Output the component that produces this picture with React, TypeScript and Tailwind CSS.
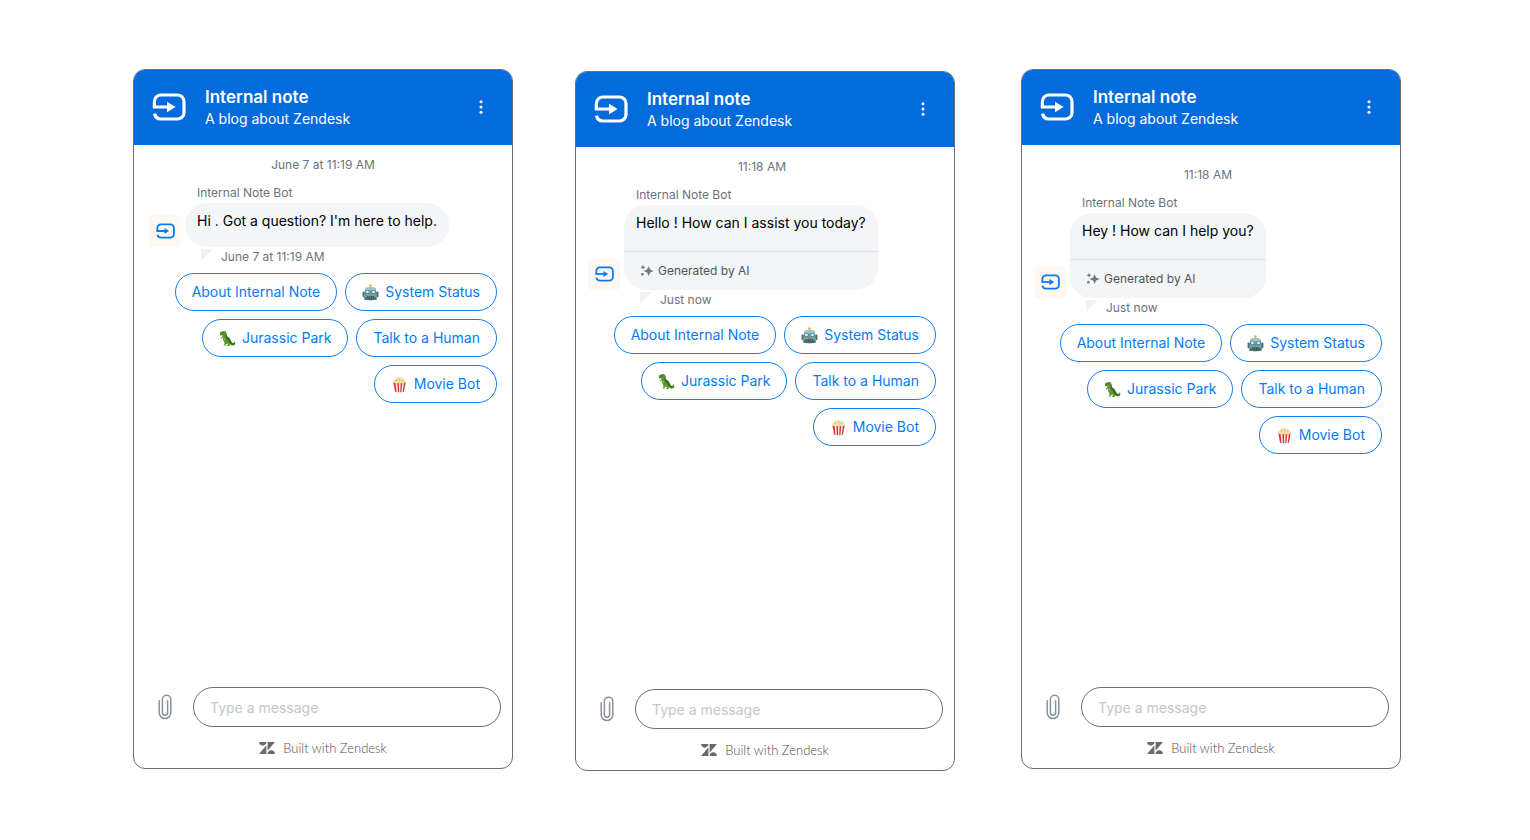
import React from "react";

type Reply = { label: string; icon?: "robot" | "dino" | "popcorn" };

type Chat = {
  time: string;
  message: string;
  meta: string;
  ai: boolean;
  panelClass: string;
  bodyClass: string;
};

const replies: Reply[] = [
  { label: "About Internal Note" },
  { label: "System Status", icon: "robot" },
  { label: "Jurassic Park", icon: "dino" },
  { label: "Talk to a Human" },
  { label: "Movie Bot", icon: "popcorn" },
];

const chats: Chat[] = [
  {
    time: "June 7 at 11:19 AM",
    message: "Hi . Got a question? I'm here to help.",
    meta: "June 7 at 11:19 AM",
    ai: false,
    panelClass: "",
    bodyClass: "pt-2.5 pl-[15px] pr-[15px]",
  },
  {
    time: "11:18 AM",
    message: "Hello ! How can I assist you today?",
    meta: "Just now",
    ai: true,
    panelClass: "mt-0.5 ml-[62px]",
    bodyClass: "pt-2.5 pl-3 pr-[18px]",
  },
  {
    time: "11:18 AM",
    message: "Hey ! How can I help you?",
    meta: "Just now",
    ai: true,
    panelClass: "ml-[66px]",
    bodyClass: "pt-5 pl-3 pr-[18px]",
  },
];

function NoteLogo({ className }: { className: string }) {
  return (
    <svg viewBox="0 0 34 28" className={className} fill="none" aria-hidden="true">
      <path
        d="M2.4 14V8.6A6.6 6.6 0 0 1 9 2h16.4A6.6 6.6 0 0 1 32 8.6v10.8a6.6 6.6 0 0 1-6.6 6.6H9c-3.400 0-5.900-2.200-6.500-5.400"
        stroke="currentColor"
        strokeWidth="3.2"
      />
      <path d="M.8 14H16" stroke="currentColor" strokeWidth="3.2" />
      <path d="M15 8.800 23.600 14 15 19.200z" fill="currentColor" />
    </svg>
  );
}

function RobotIcon() {
  return (
    <svg viewBox="0 0 18 18" className="size-[17px]" aria-hidden="true">
      <path d="M8.500 2h1v3h-1z" fill="#7b8a8f" />
      <circle cx="9" cy="1.800" r="1.500" fill="#f0b13c" />
      <rect x="0.6" y="8" width="2.4" height="6" rx="1" fill="#526a70" />
      <rect x="15" y="8" width="2.4" height="6" rx="1" fill="#526a70" />
      <path d="M3.600 4.200Q9 2.800 14.400 4.200l1.200 12.200q-6.600 1.600-13.200 0z" fill="#6fa3ac" />
      <path d="M3.600 4.200Q9 2.800 14.400 4.200l.2 2.400H3.400z" fill="#9bc5ca" />
      <path d="M2.600 14h12.800l.2 2.400q-6.600 1.600-13.200 0z" fill="#48727b" />
      <circle cx="5.800" cy="8.400" r="2.300" fill="#3c7f92" />
      <circle cx="12.200" cy="8.400" r="2.300" fill="#3c7f92" />
      <circle cx="5.800" cy="8.400" r="1.500" fill="#d7f6fa" />
      <circle cx="12.200" cy="8.400" r="1.500" fill="#d7f6fa" />
      <path d="m9 9.600 1.200 2H7.800z" fill="#d9534a" />
      <rect x="5" y="13" width="8" height="2.3" rx="1" fill="#2d4c55" />
      <path d="M6.200 13.400h1v1.500h-1zM8.500 13.400h1v1.500h-1zM10.800 13.400h1v1.500h-1z" fill="#e66a50" />
    </svg>
  );
}

function DinoIcon() {
  return (
    <svg viewBox="0 0 18 18" className="size-[17px]" aria-hidden="true">
      <path
        d="M.8 3.600C1 2 2.400 1.500 3.800 1.600 5 .8 7 1 7.600 2.300c.7 1.300.3 2.700.7 3.900.5 1.300 2.400 1.700 3.400 3.200.8 1.300 1.200 3.300 2.500 4.100 1.300.7 2.200-.4 2.300-2.200 1.300 1.800 1.200 4.600-.9 5.100-1.500.4-2.800-.3-3.900-1.200l-.4 1.700H8.700l-.2-.7 1-.3-.5-1.500-1.700.6-.1 1.500H5l-.2-.7 1-.4-.2-2.700c-1.300-1.500-1.700-3.100-1.300-4.900l-1.500 1.200-.9-.3.2-.7 1.300-1.200c.2-.5.3-.9.3-1.200l-2.200.2z"
        fill="#5b9632"
      />
      <path
        d="M7.700 3.200c.6 1.300.2 2.500.7 3.500.6 1.200 2.200 1.500 3.200 3 .8 1.200 1.200 3.200 2.500 4 1.100.6 2.100.1 2.500-1 .2 1.400-.4 2.800-1.800 3-2.700.2-3.700-2-4.700-3.700-1-1.800-3.100-2.700-3.300-5z"
        fill="#356d22"
      />
      <path d="M5 7.800c.9.300 1.300 1.800 1.100 3.200-.7-.6-1.300-1.800-1.100-3.200z" fill="#a8c86a" />
      <path d="m1 4.500 2.900-.2" stroke="#2b4b18" strokeWidth=".5" />
      <circle cx="4.300" cy="2.700" r=".5" fill="#1b2a10" />
    </svg>
  );
}

function PopcornIcon() {
  return (
    <svg viewBox="0 0 18 18" className="size-[17px]" aria-hidden="true">
      <path d="M2.500 6.500h13l-1.800 10.300q-4.700 1-9.400 0z" fill="#f5f0ee" />
      <path d="M2.500 6.500h2.300l1 10.500-1.500-.2zM6.700 6.500h1.800l.1 10.800-1.300-.1zM10.200 6.500H12l-1 10.700-1.200.1zM13.700 6.500h1.800l-1.800 10.300-1.300.2z" fill="#d9363a" />
      <g fill="#f3dfa3">
        <circle cx="4.200" cy="5.700" r="1.900" />
        <circle cx="6.200" cy="3.400" r="1.900" />
        <circle cx="9" cy="2.300" r="1.800" />
        <circle cx="11.900" cy="3.600" r="1.900" />
        <circle cx="13.800" cy="5.700" r="1.800" />
        <circle cx="7.500" cy="5.900" r="1.900" />
        <circle cx="10.800" cy="6" r="1.800" />
      </g>
      <g fill="#d2a050">
        <circle cx="5.900" cy="4.600" r=".6" />
        <circle cx="9.200" cy="4" r=".7" />
        <circle cx="12.300" cy="5" r=".6" />
        <circle cx="8.900" cy="6.500" r=".5" />
      </g>
    </svg>
  );
}

const replyIcons = { robot: RobotIcon, dino: DinoIcon, popcorn: PopcornIcon };

function SparkleIcon() {
  return (
    <svg viewBox="0 0 14 14" className="size-3.5" fill="#737578" aria-hidden="true">
      <path d="M8.600 2.200 10.100 5.600 13.600 7.100 10.100 8.600 8.600 12 7.100 8.600 3.600 7.100 7.100 5.600z" />
      <path d="m3 .8.700 1.800 1.800.7-1.800.7L3 5.800 2.300 4 .5 3.300l1.800-.7z" />
      <circle cx="2.400" cy="10.200" r="1.300" />
    </svg>
  );
}

function ClipIcon() {
  return (
    <svg viewBox="0 0 14 26" className="h-[26px] w-3.5" fill="none" stroke="#87929d" strokeWidth="1.5" strokeLinecap="round" aria-hidden="true">
      <path d="M1.200 6.800v12a5.800 5.800 0 0 0 11.600 0V5.400a4.200 4.200 0 0 0-8.400 0v13.200a2.600 2.600 0 0 0 5.200 0V6.800" />
    </svg>
  );
}

function ZendeskIcon() {
  return (
    <svg viewBox="0 2.900 24 18.200" className="h-3 w-4" fill="#68696b" aria-hidden="true">
      <path d="M12.914 2.904V16.290L24 2.905H12.914zM0 2.906C0 5.966 2.483 8.450 5.543 8.450s5.542-2.484 5.543-5.544H0zm11.086 4.807L0 21.096h11.086V7.713zm7.370 7.840c-3.063 0-5.542 2.480-5.542 5.543H24c0-3.060-2.480-5.543-5.543-5.543z" />
    </svg>
  );
}

function ReplyButton({ label, icon }: Reply) {
  const Icon = icon ? replyIcons[icon] : null;
  return (
    <button
      type="button"
      className="flex h-[38px] items-center gap-1.5 rounded-full border border-[#1080f5] bg-white px-4 text-sm whitespace-nowrap text-[#047bf8]"
    >
      {Icon && <Icon />}
      <span>{label}</span>
    </button>
  );
}

function ChatPanel({ chat }: { chat: Chat }) {
  return (
    <section
      aria-label="Internal note chat"
      className={`flex min-h-[700px] min-w-0 flex-1 flex-col overflow-hidden rounded-xl border border-[#6b6d70] bg-white ${chat.panelClass}`}
    >
      <header className="flex h-[75px] items-center bg-[#046bdc] pr-[15px] pb-0.5 pl-[18px] text-white">
        <NoteLogo className="h-7 w-[34px]" />
        <div className="ml-[19px] flex-1">
          <h2 className="text-[17px] leading-6 font-semibold">Internal note</h2>
          <p className="text-sm leading-5">A blog about Zendesk</p>
        </div>
        <button type="button" aria-label="More options" className="flex size-8 items-center justify-center">
          <svg viewBox="0 0 4 14" className="h-3.5 w-1" fill="currentColor" aria-hidden="true">
            <circle cx="2" cy="1.700" r="1.500" />
            <circle cx="2" cy="7" r="1.500" />
            <circle cx="2" cy="12.300" r="1.500" />
          </svg>
        </button>
      </header>

      <div className={`flex-1 ${chat.bodyClass}`}>
        <p className="text-center text-xs leading-5 text-[#68737d]">{chat.time}</p>
        <p className="mt-2 pl-12 text-xs leading-5 text-[#68737d]">Internal Note Bot</p>
        <div className="flex items-end gap-1">
          <div className="flex size-8 items-center justify-center rounded bg-[#fff8f0] text-[#047bf8]">
            <NoteLogo className="h-4 w-[19px]" />
          </div>
          <div className="rounded-[22px] bg-[#f4f5f7]">
            <p className={`px-3 pt-2 text-sm leading-5 text-black ${chat.ai ? "pb-[18px]" : "pb-4"}`}>{chat.message}</p>
            {chat.ai && (
              <div className="flex h-[39px] items-center gap-1 border-t border-[#dcdfe3] px-4 text-xs text-[#505357]">
                <SparkleIcon />
                <span>Generated by AI</span>
              </div>
            )}
          </div>
        </div>
        <div className="flex items-start gap-2 pl-[52px]">
          <svg viewBox="0 0 12 12" className="mt-0.5 size-3" fill="#f1f2f4" aria-hidden="true">
            <path d="M0 0h12L0 12z" />
          </svg>
          <span className="text-xs leading-5 text-[#68737d]">{chat.meta}</span>
        </div>
        <div className="mt-1.5 flex flex-wrap justify-end gap-2 pl-6">
          {replies.map((r) => (
            <ReplyButton key={r.label} {...r} />
          ))}
        </div>
      </div>

      <form className="flex items-center pr-[11px] pl-6" onSubmit={(e) => e.preventDefault()}>
        <button type="button" aria-label="Attach a file">
          <ClipIcon />
        </button>
        <input
          type="text"
          aria-label="Type a message"
          placeholder="Type a message"
          className="ml-[21px] h-10 min-w-0 flex-1 rounded-full border border-[#6b6d70] px-4 text-sm leading-6 text-black placeholder:text-[#c2c8cc]"
        />
      </form>
      <footer className="mt-[11px] mb-2.5 flex items-center justify-center gap-2 font-[Lato,sans-serif] text-[13px] leading-5 font-light text-[#4b4c4e]">
        <ZendeskIcon />
        <span>Built with Zendesk</span>
      </footer>
    </section>
  );
}

export default function App() {
  return (
    <main className="flex min-h-screen items-start bg-white pt-[69px] pr-[129px] pl-[133px] font-[Inter,sans-serif]">
      {chats.map((chat, i) => (
        <ChatPanel key={i} chat={chat} />
      ))}
    </main>
  );
}
